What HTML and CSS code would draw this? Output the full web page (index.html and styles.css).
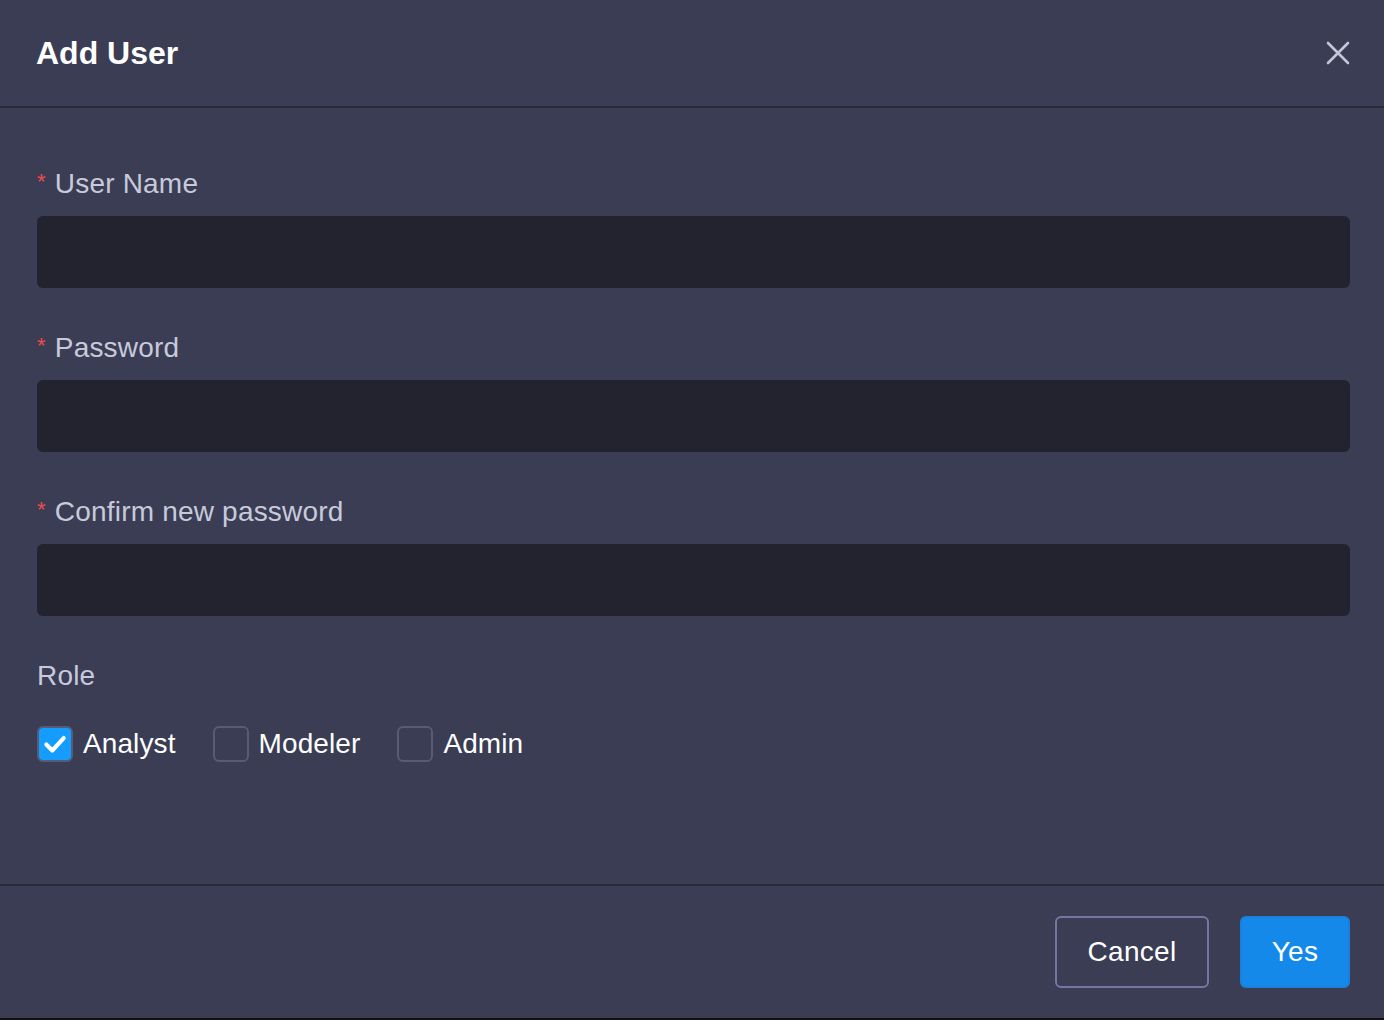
FILE: index.html
```html
<!DOCTYPE html>
<html lang="en">
<head>
<meta charset="utf-8">
<title>Add User</title>
<link rel="stylesheet" href="styles.css">
</head>
<body>
<div class="dialog">
  <header class="dialog-header">
    <h1 class="dialog-title">Add User</h1>
    <button class="close-btn" aria-label="Close">
      <svg width="24" height="24" viewBox="0 0 24 24"><path d="M2 2 L22 22 M22 2 L2 22" stroke="#c3c8d8" stroke-width="2.6" stroke-linecap="round" fill="none"/></svg>
    </button>
  </header>
  <main class="dialog-body">
    <div class="form-item">
      <label class="form-label"><span class="req">*</span>User Name</label>
      <input class="form-input" type="text">
    </div>
    <div class="form-item">
      <label class="form-label"><span class="req">*</span>Password</label>
      <input class="form-input" type="password">
    </div>
    <div class="form-item">
      <label class="form-label"><span class="req">*</span>Confirm new password</label>
      <input class="form-input" type="password">
    </div>
    <div class="form-item role">
      <div class="form-label">Role</div>
      <div class="checks">
        <label class="check">
          <span class="box checked">
            <svg width="26" height="26" viewBox="0 0 24 24"><path d="M4 12.5 L9.5 18 L20 6.5" stroke="#fff" stroke-width="3.8" stroke-linecap="round" stroke-linejoin="round" fill="none"/></svg>
          </span>Analyst
        </label>
        <label class="check"><span class="box"></span>Modeler</label>
        <label class="check"><span class="box"></span>Admin</label>
      </div>
    </div>
  </main>
  <footer class="dialog-footer">
    <button class="btn btn-cancel">Cancel</button>
    <button class="btn btn-yes">Yes</button>
  </footer>
</div>
</body>
</html>
```
FILE: styles.css
```css
* { box-sizing: border-box; }
html, body { margin: 0; padding: 0; }
body {
  background: #111114;
  font-family: "Liberation Sans", Arial, sans-serif;
  height: 1020px;
  overflow: hidden;
}
.dialog {
  height: 1018px;
  background: #3a3d53;
  display: flex;
  flex-direction: column;
}
.dialog-header {
  height: 108px;
  border-bottom: 2px solid #292a36;
  display: flex;
  align-items: center;
  justify-content: space-between;
  padding: 0 34px 0 37px;
}
.dialog-title {
  margin: 0;
  font-size: 32px;
  font-weight: 700;
  color: #ffffff;
  line-height: 40px;
  margin-left: -1px;
}
.close-btn {
  background: none;
  border: 0;
  padding: 0;
  width: 24px;
  height: 24px;
  display: flex;
}
.dialog-body {
  flex: 1;
  padding: 56px 34px 0 37px;
}
.form-item { margin-bottom: 40px; }
.form-label {
  display: block;
  font-size: 28px;
  line-height: 40px;
  height: 40px;
  color: #c7cadb;
  margin-bottom: 12px;
  letter-spacing: 0.2px;
}
.req {
  color: #ef4b4b;
  font-size: 22px;
  line-height: 0;
  margin-right: 9px;
  position: relative;
  top: -4px;
}
.form-input {
  display: block;
  width: 100%;
  height: 72px;
  border: 0;
  border-radius: 6px;
  background: #22232f;
  outline: none;
  padding: 0 16px;
  color: #fff;
  font-size: 28px;
}
.role .form-label { margin-bottom: 30px; }
.checks { display: flex; align-items: center; }
.check {
  display: flex;
  align-items: center;
  font-size: 28px;
  line-height: 36px;
  color: #ffffff;
  margin-right: 37px;
  letter-spacing: 0.1px;
}
.box {
  width: 36px;
  height: 36px;
  border: 2px solid #575b75;
  border-radius: 6px;
  margin-right: 10px;
  display: flex;
  align-items: center;
  justify-content: center;
}
.box.checked { background: #149cff; }
.dialog-footer {
  height: 134px;
  border-top: 2px solid #292a36;
  display: flex;
  justify-content: flex-end;
  align-items: flex-start;
  padding: 30px 34px 0 37px;
  gap: 31px;
}
.btn {
  height: 72px;
  border-radius: 6px;
  font-family: "Liberation Sans", Arial, sans-serif;
  font-size: 28px;
  color: #ffffff;
  padding: 0;
  letter-spacing: 0.3px;
}
.btn-cancel {
  width: 154px;
  background: transparent;
  border: 2px solid #7276a0;
}
.btn-yes {
  width: 110px;
  background: #1589ea;
  border: 2px solid #1a80de;
}
```
